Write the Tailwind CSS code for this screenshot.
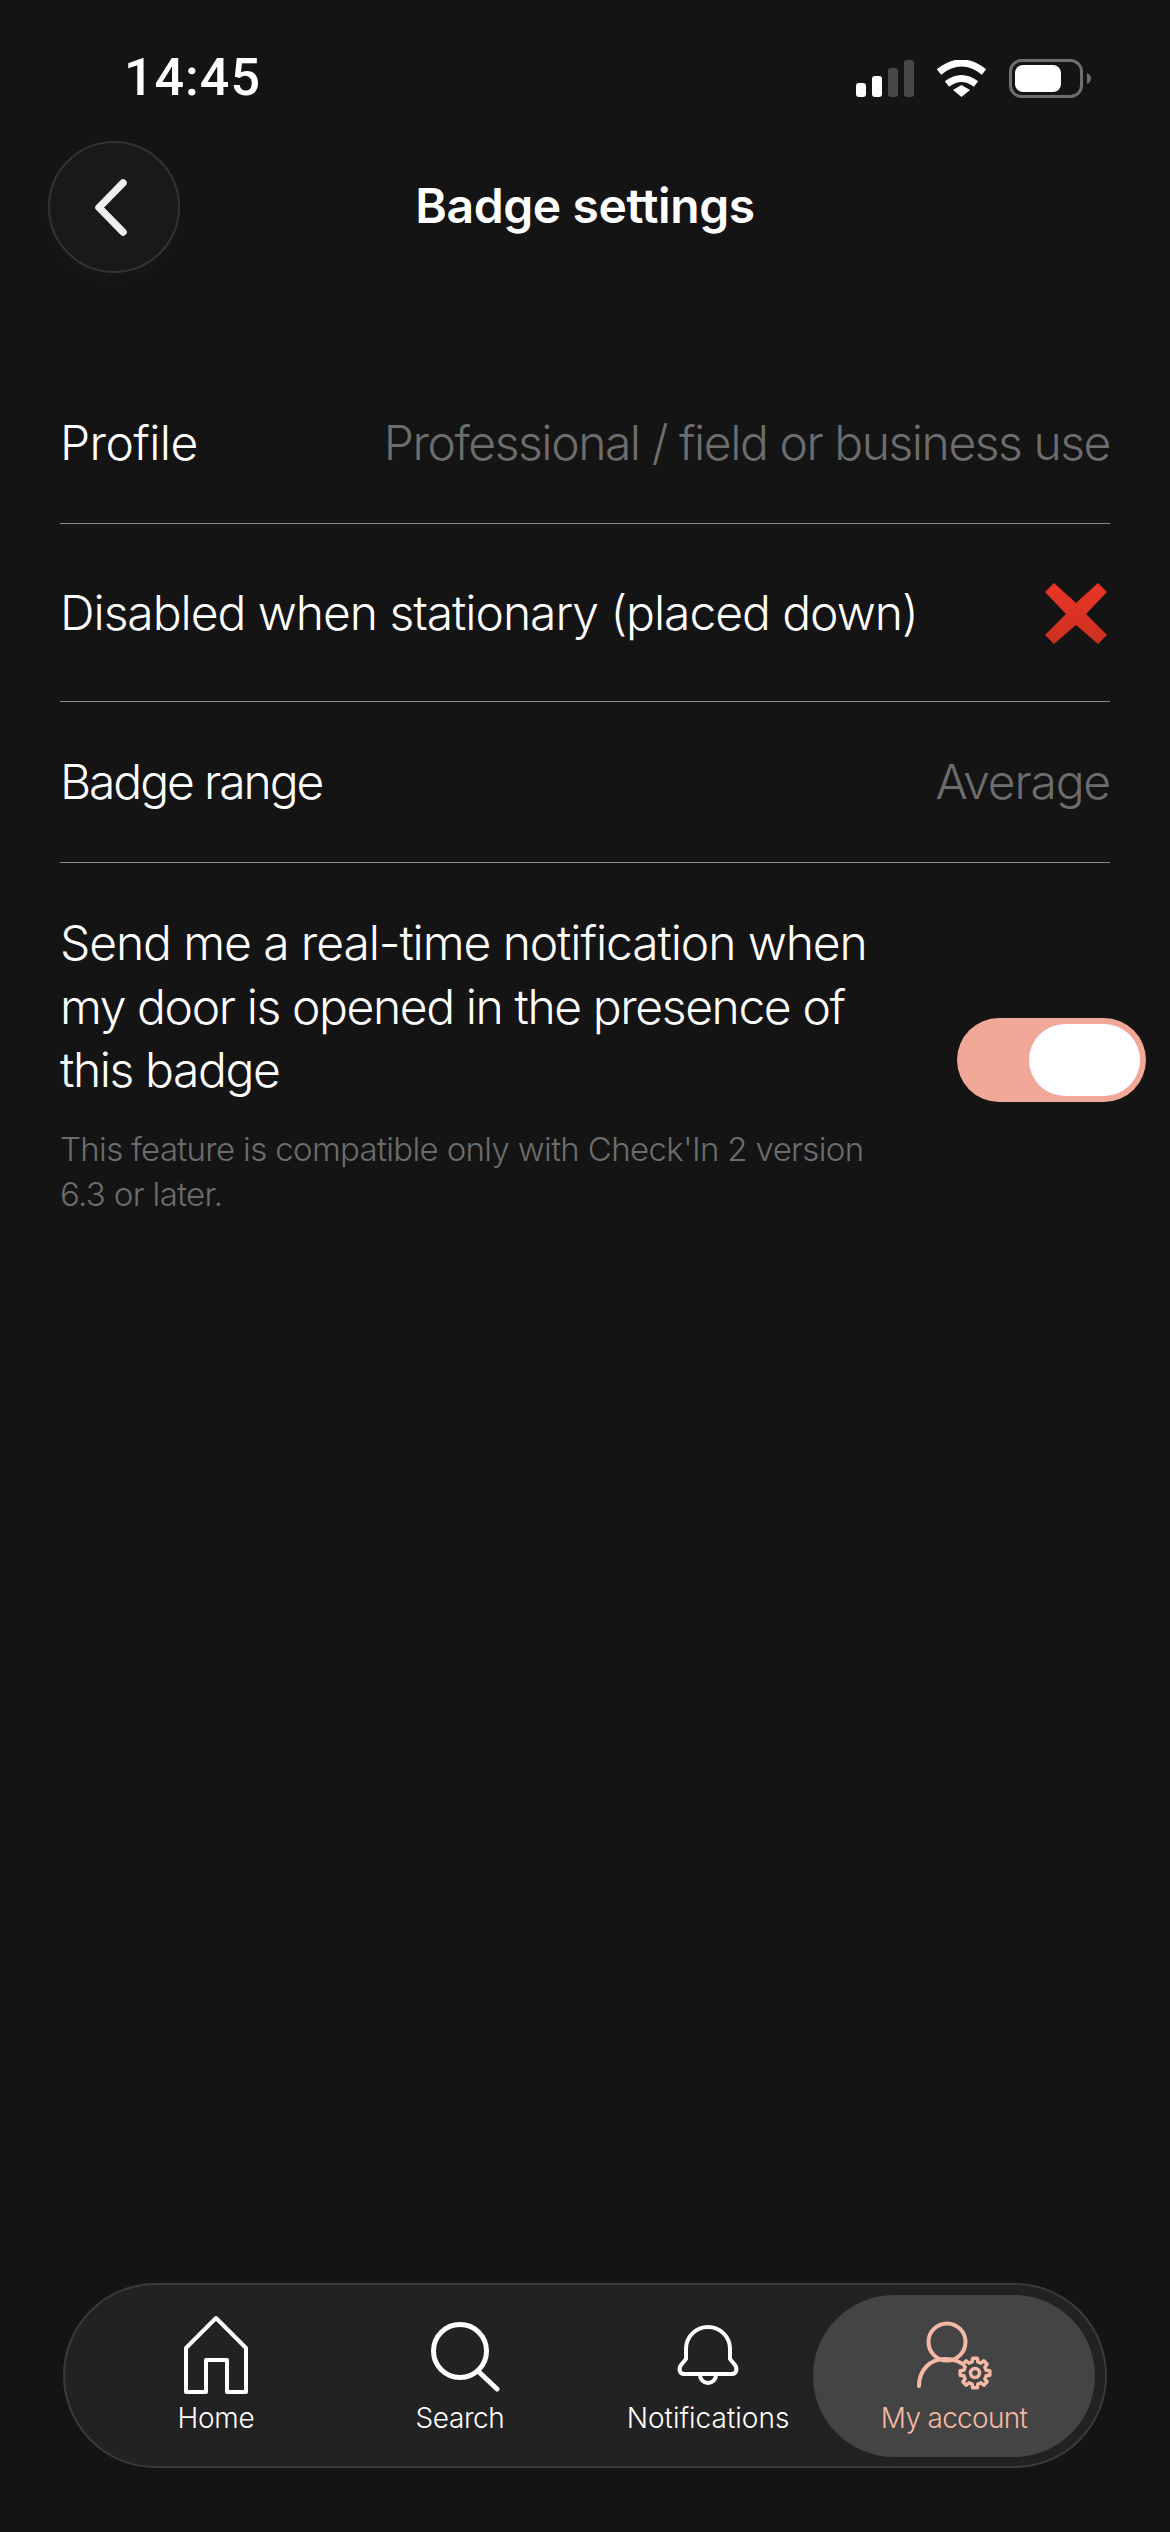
<!DOCTYPE html>
<html lang="en">
<head>
<meta charset="utf-8">
<title>Badge settings</title>
<script src="https://cdn.jsdelivr.net/npm/@tailwindcss/browser@4"></script>
</head>
<body class="bg-[#141414]">
<div class="w-[1170px] h-[2532px] flex flex-col overflow-hidden bg-[#141414] text-white font-['Inter',sans-serif] font-light">

  <!-- Status bar -->
  <div class="mt-[48px] h-[60px] flex items-center justify-between pl-[124px] pr-[79px]">
    <span class="text-[52px] leading-none font-medium font-['Roboto',sans-serif] tracking-[1px]">14:45</span>
    <div class="flex items-center gap-[22px]">
      <svg width="58" height="37" viewBox="0 0 58 37">
        <rect x="0" y="23" width="10" height="14" rx="3" fill="#fff"/>
        <rect x="16" y="16" width="10" height="21" rx="3" fill="#fff"/>
        <rect x="32" y="8" width="10" height="29" rx="3" fill="#484848"/>
        <rect x="48" y="0" width="10" height="37" rx="3" fill="#484848"/>
      </svg>
      <svg width="51" height="37" viewBox="0 0 51 37">
        <path d="M3 12Q25.5 -6 48 12" fill="none" stroke="#fff" stroke-width="7"/>
        <path d="M11 24Q25.5 13 40 24" fill="none" stroke="#fff" stroke-width="7"/>
        <polygon points="17,30 25.5,25 34,30 25.5,37" fill="#fff"/>
      </svg>
      <svg width="82" height="39" viewBox="0 0 82 39">
        <rect x="1.5" y="1.5" width="71" height="36" rx="11" fill="none" stroke="#6e6e6e" stroke-width="3"/>
        <rect x="6" y="6" width="46" height="27" rx="8" fill="#fff"/>
        <path d="M78 14Q82 16 82 19.5Q82 23 78 25Z" fill="#6e6e6e"/>
      </svg>
    </div>
  </div>

  <!-- Header -->
  <div class="mt-[33px] px-[48px] grid grid-cols-[132px_1fr_132px] items-center">
    <div class="w-[132px] h-[132px] rounded-full bg-[#191919] border-2 border-[#333] shadow-[0_8px_24px_rgba(255,255,255,0.02)] flex items-center justify-center">
      <svg width="48" height="66" viewBox="0 0 48 66">
        <path d="M33 9L9 33.5L33 58" fill="none" stroke="#eeeeee" stroke-width="7.5" stroke-linecap="round" stroke-linejoin="round"/>
      </svg>
    </div>
    <h1 class="pb-[2px] text-center text-[48px] font-semibold tracking-[-0.4px]">Badge settings</h1>
  </div>

  <!-- Settings -->
  <div class="mt-[92px] px-[60px] text-[48px]">
    <div class="h-[159px] pb-[2px] border-b border-[#8a8a8a] flex items-center justify-between">
      <span class="tracking-[-0.6px]">Profile</span>
      <span class="text-[#6d6d6d] tracking-[-1.45px]">Professional / field or business use</span>
    </div>
    <div class="h-[178px] border-b border-[#8a8a8a] flex items-center justify-between">
      <span class="tracking-[-1.05px]">Disabled when stationary (placed down)</span>
      <svg class="mr-[3px] mt-[2px]" width="62" height="62" viewBox="0 0 62 62">
        <defs>
          <linearGradient id="cross" x1="0" y1="0" x2="0" y2="1">
            <stop offset="0" stop-color="#ea3526"/>
            <stop offset="1" stop-color="#cc3020"/>
          </linearGradient>
        </defs>
        <polygon fill="url(#cross)" points="9,0 31,20 53,0 62,9 41,31 62,52 53,61 31,42 9,61 0,52 21,31 0,9"/>
      </svg>
    </div>
    <div class="h-[161px] border-b border-[#8a8a8a] flex items-center justify-between">
      <span class="tracking-[-2.1px]">Badge range</span>
      <span class="text-[#6d6d6d] tracking-[-1.2px]">Average</span>
    </div>
    <div class="pt-[48px] flex items-center justify-between -mr-[36px]">
      <div class="w-[830px]">
        <p class="leading-[63.5px]">
          <span class="block tracking-[-1.1px]">Send me a real-time notification when</span>
          <span class="block tracking-[-1.4px]">my door is opened in the presence of</span>
          <span class="block tracking-[-1.4px]">this badge</span>
        </p>
        <p class="mt-[25px] text-[33px] leading-[45px] text-[#6d6d6d] tracking-[-0.65px]">This feature is compatible only with Check'In 2 version 6.3 or later.</p>
      </div>
      <div class="mb-[8px] w-[189px] h-[84px] rounded-full bg-[#f2a898] flex items-center justify-end pr-[6px]">
        <div class="w-[111px] h-[72px] rounded-full bg-white"></div>
      </div>
    </div>
  </div>

  <!-- Bottom navigation -->
  <nav class="mt-auto mb-[64px] mx-[63px] h-[185px] rounded-full bg-[#222] border-2 border-[#3a3a3a] pl-[31px] flex items-center text-[28px] leading-[36px] tracking-[-0.2px]">
    <a class="w-[240px] h-[162px] pt-[20px] flex flex-col items-center">
      <svg width="68" height="80" viewBox="0 0 68 80">
        <path d="M34 3L64 33V77H45V45H24V77H4V33Z" fill="none" stroke="#fff" stroke-width="4" stroke-linejoin="round"/>
      </svg>
      <span class="mt-[5px]">Home</span>
    </a>
    <a class="ml-[4px] w-[240px] h-[162px] pt-[20px] flex flex-col items-center">
      <svg width="80" height="80" viewBox="0 0 80 80">
        <circle cx="40" cy="36" r="26.5" fill="none" stroke="#fff" stroke-width="5"/>
        <path d="M59 57L77 74" fill="none" stroke="#fff" stroke-width="5" stroke-linecap="round"/>
      </svg>
      <span class="mt-[5px] tracking-[-0.4px]">Search</span>
    </a>
    <a class="ml-[23px] w-[210px] h-[162px] pt-[20px] flex flex-col items-center">
      <svg width="80" height="80" viewBox="0 0 80 80">
        <path d="M18 44V34A22 22 0 0 1 62 34V44L67 50C70 54 68 59 64 59H16C12 59 10 54 13 50Z" fill="none" stroke="#fff" stroke-width="4" stroke-linejoin="round"/>
        <path d="M32 60A8 8 0 0 0 48 60" fill="none" stroke="#fff" stroke-width="4"/>
      </svg>
      <span class="mt-[5px] tracking-[0px]">Notifications</span>
    </a>
    <a class="w-[282px] h-[162px] pt-[20px] rounded-full bg-[#444] flex flex-col items-center text-[#f5b9a5]">
      <svg width="80" height="80" viewBox="0 0 80 80">
        <circle cx="33" cy="27" r="18.5" fill="none" stroke="#f5b9a5" stroke-width="4"/>
        <path d="M5 71C5 55 16 44 31 44C37 44 42 45 47 48" fill="none" stroke="#f5b9a5" stroke-width="4" stroke-linecap="round"/>
        <g transform="translate(61 58)" fill="none" stroke="#f5b9a5" stroke-width="3.5" stroke-linejoin="round">
          <polygon points="11.16,-2.78 14.82,-2.35 14.82,2.35 11.16,2.78 9.86,5.92 12.14,8.82 8.82,12.14 5.92,9.86 2.78,11.16 2.35,14.82 -2.35,14.82 -2.78,11.16 -5.92,9.86 -8.82,12.14 -12.14,8.82 -9.86,5.92 -11.16,2.78 -14.82,2.35 -14.82,-2.35 -11.16,-2.78 -9.86,-5.92 -12.14,-8.82 -8.82,-12.14 -5.92,-9.86 -2.78,-11.16 -2.35,-14.82 2.35,-14.82 2.78,-11.16 5.92,-9.86 8.82,-12.14 12.14,-8.82 9.86,-5.92"/>
          <circle r="4.5"/>
        </g>
      </svg>
      <span class="mt-[5px] tracking-[-0.7px]">My account</span>
    </a>
  </nav>
</div>
</body>
</html>
